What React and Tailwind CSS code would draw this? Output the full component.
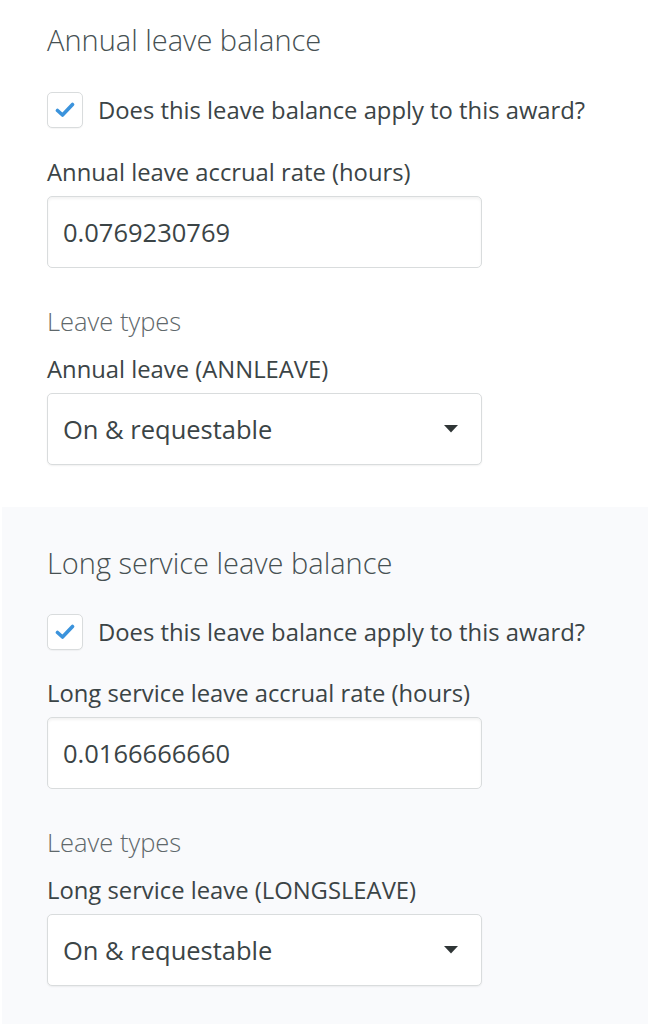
const font = { fontFamily: '"Open Sans", "Liberation Sans", sans-serif' };

function Check() {
  return (
    <div className="flex h-[36px] w-[36px] shrink-0 items-center justify-center rounded-[5px] border border-[#d9dcdd] bg-white shadow-[0_1px_1px_rgba(0,0,0,0.04)]">
      <svg width="20" height="16" viewBox="0 0 20 16" fill="none">
        <path d="M2.5 8.5 L7.5 13 L17.5 2.5" stroke="#3b93dc" strokeWidth="3.6" strokeLinecap="round" strokeLinejoin="round" />
      </svg>
    </div>
  );
}

function LeaveBlock({ title, rateLabel, rate, typeLabel, className, pt, tight }) {
  return (
    <section className={className}>
      <div className={`px-[47px] pb-[42px] ${pt}`}>
        <h2 className="text-[29px] font-light leading-[36px] text-[#465052]">{title}</h2>
        <label className={`${tight ? "mt-[33px]" : "mt-[34px]"} flex items-center gap-[15px]`}>
          <Check />
          <span className="whitespace-nowrap text-[23.8px] leading-[30px] text-[#3b4446]">
            Does this leave balance apply to this award?
          </span>
        </label>
        <p className={`${tight ? "mt-[28px]" : "mt-[29px]"} text-[23.8px] leading-[30px] text-[#3b4446]`}>{rateLabel}</p>
        <div className="mt-[9px] flex h-[72px] w-[435px] items-center rounded-[5px] border border-[#d9dcdd] bg-white px-[15px] shadow-[inset_0_2px_3px_rgba(0,0,0,0.05)]">
          <span className="text-[25.5px] text-[#3b4446]">{rate}</span>
        </div>
        <p className="mt-[38px] text-[25.5px] font-light leading-[30px] text-[#5f686b]">Leave types</p>
        <p className="mt-[18px] text-[23.8px] leading-[30px] text-[#3b4446]">{typeLabel}</p>
        <div className="mt-[9px] flex h-[72px] w-[435px] items-center justify-between rounded-[5px] border border-[#d9dcdd] bg-white pl-[15px] pr-[23px] shadow-[0_1px_2px_rgba(0,0,0,0.06)]">
          <span className="text-[25.5px] text-[#3b4446]">On &amp; requestable</span>
          <svg width="14" height="8" viewBox="0 0 14 8">
            <path d="M0 0 H14 L7 7.5 Z" fill="#2f3536" />
          </svg>
        </div>
      </div>
    </section>
  );
}

export default function App() {
  return (
    <div className="min-h-[1024px] w-[648px] bg-white" style={font}>
      <LeaveBlock
        className="bg-white"
        pt="pt-[22px]"
        title="Annual leave balance"
        rateLabel="Annual leave accrual rate (hours)"
        rate="0.0769230769"
        typeLabel="Annual leave (ANNLEAVE)"
      />
      <LeaveBlock
        className="ml-[2px] min-h-[517px] bg-[#f9fafc] [&>div]:pl-[45px]"
        pt="pt-[38px]"
        tight
        title="Long service leave balance"
        rateLabel="Long service leave accrual rate (hours)"
        rate="0.0166666660"
        typeLabel="Long service leave (LONGSLEAVE)"
      />
    </div>
  );
}
